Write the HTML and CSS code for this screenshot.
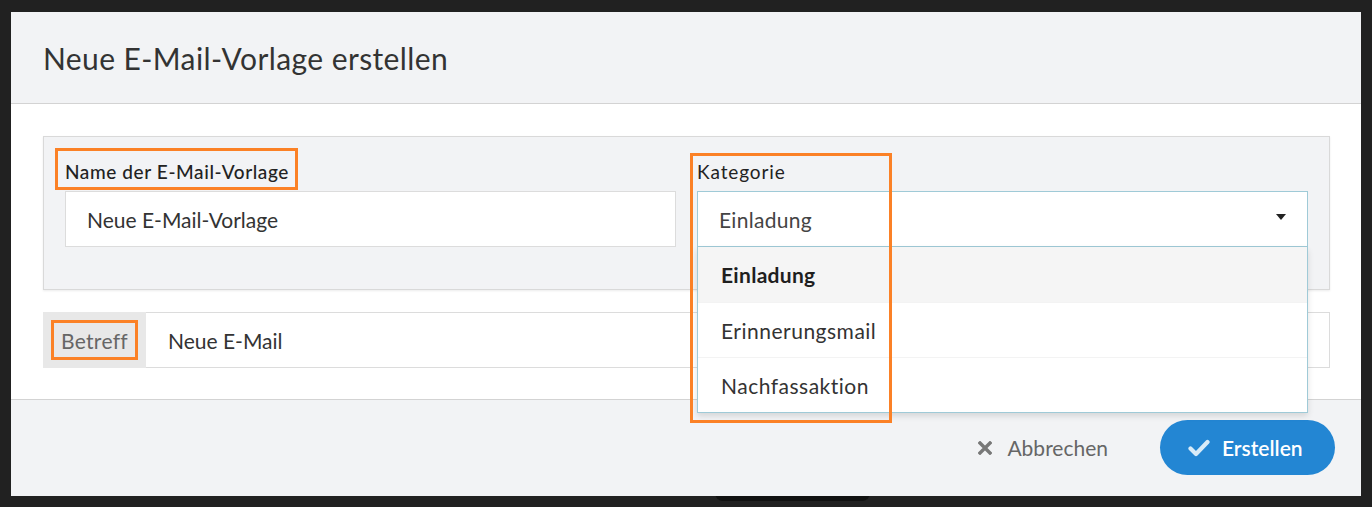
FILE: index.html
```html
<!DOCTYPE html>
<html lang="de">
<head>
<meta charset="utf-8">
<title>Neue E-Mail-Vorlage erstellen</title>
<link rel="stylesheet" href="styles.css">
</head>
<body>
<div class="backdrop">
  <div class="modal">
    <header class="modal-head">
      <h1 class="modal-title">Neue E-Mail-Vorlage erstellen</h1>
    </header>

    <div class="modal-body">
      <div class="panel">
        <div class="field">
          <label class="label label-marked">Name der E-Mail-Vorlage</label>
          <div class="input">Neue E-Mail-Vorlage</div>
        </div>
        <div class="field field-select">
          <label class="label">Kategorie</label>
          <div class="select">
            <span class="select-value">Einladung</span>
            <span class="caret"></span>
            <ul class="menu">
              <li class="menu-item is-active">Einladung</li>
              <li class="menu-item">Erinnerungsmail</li>
              <li class="menu-item">Nachfassaktion</li>
            </ul>
          </div>
          <span class="mark mark-category"></span>
        </div>
      </div>

      <div class="subject">
        <span class="addon"><span class="addon-text">Betreff</span></span>
        <div class="subject-input">Neue E-Mail</div>
      </div>
    </div>

    <footer class="modal-foot">
      <button class="btn btn-cancel" type="button">
        <svg class="icon-x" width="14" height="14" viewBox="0 0 14 14" aria-hidden="true">
          <path d="M2 2 L12 12 M12 2 L2 12" stroke="#787878" stroke-width="3.4" stroke-linecap="square" fill="none"/>
        </svg>
        <span>Abbrechen</span>
      </button>
      <button class="btn btn-create" type="button">
        <svg class="icon-check" width="22" height="18" viewBox="0 0 22 18" aria-hidden="true">
          <path d="M2.5 9.5 L8 15 L19.5 3" stroke="#d8ebf8" stroke-width="4.2" stroke-linecap="round" stroke-linejoin="round" fill="none"/>
        </svg>
        <span>Erstellen</span>
      </button>
    </footer>
  </div>
  <div class="dock"></div>
</div>
</body>
</html>
```

FILE: styles.css
```css
* {
  box-sizing: border-box;
}

html,
body {
  margin: 0;
  padding: 0;
}

body {
  background: #212121;
  font-family: Lato, "Open Sans", "Liberation Sans", sans-serif;
  color: #333;
  width: 1372px;
  height: 507px;
  overflow: hidden;
}

.backdrop {
  position: relative;
  padding: 12px 11px 0 11px;
  height: 507px;
}

/* modal window */
.modal {
  position: relative;
  z-index: 1;
  width: 1350px;
  height: 484px;
  background: #fff;
  display: flex;
  flex-direction: column;
}

.modal-head {
  height: 92px;
  background: #f2f3f5;
  border-bottom: 1px solid #d3d3d3;
  display: flex;
  align-items: center;
  padding: 0 32px;
}

.modal-title {
  margin: 0;
  font-size: 30px;
  font-weight: 400;
  color: #333;
  letter-spacing: 0.4px;
}

.modal-body {
  padding: 32px 31px 30px 32px;
  height: 295px;
}

/* grey form panel */
.panel {
  background: #f2f3f5;
  border: 1px solid #d9d9d9;
  box-shadow: 0 1px 2px rgba(0, 0, 0, 0.08);
  padding: 23px 21px 43px 21px;
  display: grid;
  grid-template-columns: 611px 611px;
  column-gap: 21px;
  height: 154px;
}

.field {
  position: relative;
  display: flex;
  flex-direction: column;
  align-items: flex-start;
}

.label {
  position: relative;
  display: inline-block;
  height: 24px;
  line-height: 24px;
  font-size: 19px;
  letter-spacing: 0.9px;
  color: #222;
  margin-bottom: 7px;
}

.label-marked {
  font-weight: 500;
  letter-spacing: 0.6px;
}

.label-marked::after {
  content: "";
  position: absolute;
  top: -12px;
  left: -10px;
  right: -9px;
  bottom: -6px;
  border: 3px solid #fb8126;
}

.input {
  width: 100%;
  height: 56px;
  background: #fff;
  border: 1px solid #dcdcdc;
  display: flex;
  align-items: center;
  padding: 0 21px;
  font-size: 21px;
  color: #333;
}

/* category select with open menu */
.select {
  position: relative;
  width: 100%;
  height: 56px;
  background: #fff;
  border: 1px solid #9fcad7;
  display: flex;
  align-items: center;
  justify-content: space-between;
  padding: 0 21px 0 21px;
  font-size: 21px;
  letter-spacing: 0.3px;
  color: #444;
}

.caret {
  width: 0;
  height: 0;
  border-left: 5px solid transparent;
  border-right: 5px solid transparent;
  border-top: 6px solid #222;
  margin-top: -4px;
}

.menu {
  position: absolute;
  z-index: 3;
  top: 55px;
  left: -1px;
  right: -1px;
  margin: 0;
  padding: 0;
  list-style: none;
  background: #fff;
  border: 1px solid #9fcad7;
  border-top: none;
  box-shadow: 0 3px 6px rgba(0, 0, 0, 0.12);
}

.menu-item {
  height: 55px;
  display: flex;
  align-items: center;
  padding: 0 23px;
  font-size: 21px;
  color: #333;
  border-top: 1px solid #f3f3f3;
  letter-spacing: 0.5px;
}

.menu-item:first-child {
  border-top: none;
}

.menu-item.is-active {
  background: #f5f5f5;
  font-weight: 700;
  color: #1f1f1f;
  letter-spacing: 0.3px;
}

.mark {
  position: absolute;
  z-index: 4;
  border: 3px solid #fb8126;
  pointer-events: none;
}

.mark-category {
  top: -7px;
  left: -7px;
  width: 202px;
  height: 270px;
}

/* subject line */
.subject {
  margin-top: 22px;
  display: flex;
  height: 56px;
}

.addon {
  position: relative;
  width: 103px;
  background: #e8e8e8;
  display: flex;
  align-items: center;
  padding-left: 18px;
}

.addon::after {
  content: "";
  position: absolute;
  inset: 8px;
  border: 3px solid #fb8126;
}

.addon-text {
  font-size: 21px;
  color: #666;
  letter-spacing: 0.3px;
}

.subject-input {
  flex: 1;
  background: #fff;
  border: 1px solid #dcdcdc;
  border-left: none;
  display: flex;
  align-items: center;
  padding-left: 22px;
  font-size: 21px;
  color: #333;
}

/* footer buttons */
.modal-foot {
  flex: 1;
  background: #f2f3f5;
  border-top: 1px solid #d3d3d3;
  display: flex;
  align-items: center;
  justify-content: flex-end;
  padding: 0 26px 1px 0;
  gap: 28px;
}

.btn {
  font-family: inherit;
  border: none;
  display: inline-flex;
  align-items: center;
  cursor: pointer;
}

.btn-cancel {
  background: transparent;
  color: #666;
  font-size: 21px;
  padding: 0 24px;
  gap: 15px;
  height: 55px;
}

.btn-create {
  width: 175px;
  height: 55px;
  border-radius: 28px;
  background: #2386d3;
  color: #fff;
  font-size: 21px;
  font-weight: 600;
  padding: 0 0 0 28px;
  gap: 12px;
}

.icon-check {
  margin-top: 1px;
}

/* shadow of the docked bar behind the dialog */
.dock {
  position: absolute;
  left: 715px;
  top: 490px;
  width: 155px;
  height: 11px;
  border-radius: 0 0 8px 8px;
  background: #111;
}
```
